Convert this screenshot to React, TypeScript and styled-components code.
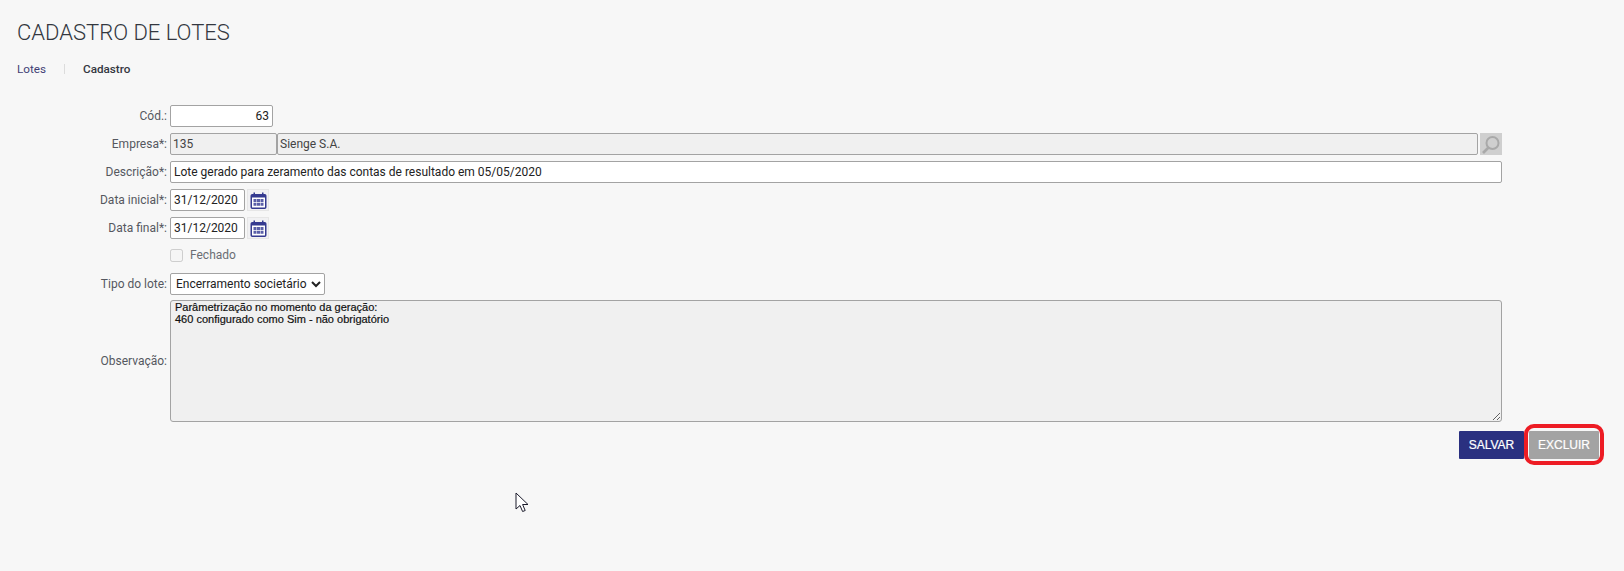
import styled, { createGlobalStyle } from 'styled-components'

const GlobalStyle = createGlobalStyle`
  html, body {
    margin: 0;
    height: 100%;
    background: #f7f7f7;
  }
  body {
    font-family: Roboto, "Liberation Sans", sans-serif;
    overflow: hidden;
  }
`

const Page = styled.div`
  position: relative;
  height: 571px;
  padding: 20px 25px 0 17px;
  box-sizing: border-box;
`

const Title = styled.h1`
  margin: 0;
  font-size: 22px;
  line-height: 26px;
  font-weight: 300;
  color: #33373f;
`

const Tabs = styled.nav`
  display: flex;
  align-items: center;
  margin-top: 15px;
  height: 16px;
  font-size: 11.7px;
`

const Tab = styled.span<{ $current?: boolean }>`
  color: ${(p) => (p.$current ? '#33363f' : '#3f3f75')};
  font-weight: ${(p) => (p.$current ? 500 : 400)};
`

const TabDivider = styled.span`
  width: 1px;
  height: 10px;
  margin: 0 18px;
  background: #dcdcdc;
`

const Form = styled.form`
  display: grid;
  grid-template-columns: 150px 1fr;
  column-gap: 3px;
  row-gap: 6px;
  margin-top: 28px;
  margin-right: 97px;
`

const Label = styled.label`
  display: flex;
  align-items: center;
  justify-content: flex-end;
  font-size: 12px;
  color: #55585f;
`

const Row = styled.div`
  display: flex;
  align-items: center;
  height: 22px;
`

const Input = styled.input<{ $width?: number; $right?: boolean; $grow?: boolean }>`
  box-sizing: border-box;
  width: ${(p) => (p.$width ? `${p.$width}px` : 'auto')};
  flex: ${(p) => (p.$grow ? '1 1 0' : '0 0 auto')};
  min-width: 0;
  height: 22px;
  padding: 0 3px;
  border: 1px solid #a3a3a3;
  border-radius: 2px;
  background: #fff;
  font-family: Roboto, sans-serif;
  font-size: 12px;
  color: #222;
  text-align: ${(p) => (p.$right ? 'right' : 'left')};
  outline: none;

  &:read-only[data-locked] {
    padding: 0 2px;
    background: #f0f0f0;
    color: #444;
  }
`

const IconButton = styled.button<{ $muted?: boolean }>`
  display: flex;
  align-items: center;
  justify-content: center;
  flex: none;
  box-sizing: border-box;
  width: 22px;
  height: 22px;
  margin-left: 2px;
  padding: 0;
  border: ${(p) => (p.$muted ? 'none' : '1px solid #e6e6e6')};
  background: ${(p) => (p.$muted ? '#cfcfcf' : '#f1f1f3')};
`

const CheckRow = styled(Row)`
  gap: 7px;
  font-size: 12px;
  color: #6b6e74;
  transform: translateY(-1px);
`

const Check = styled.input`
  width: 13px;
  height: 13px;
  margin: 0;
`

const Select = styled.select`
  box-sizing: border-box;
  width: 155px;
  height: 22px;
  padding: 0 0 0 1px;
  border: 1px solid #a3a3a3;
  border-radius: 2px;
  background: #fff;
  font-family: Roboto, sans-serif;
  font-size: 12px;
  color: #222;
`

const ObsLabel = styled(Label)`
  margin-top: -1px;
`

const Obs = styled.textarea`
  display: block;
  box-sizing: border-box;
  width: 100%;
  height: 122px;
  margin: -1px 0 0;
  padding: 0 4px;
  border: 1px solid #a3a3a3;
  border-radius: 3px;
  background: #f0f0f0;
  font-family: "Liberation Sans", Arial, sans-serif;
  font-size: 11px;
  line-height: 12px;
  color: #111;
  -webkit-text-stroke: 0.2px #111;
  outline: none;
`

const Actions = styled.div`
  display: flex;
  justify-content: flex-end;
  gap: 5px;
  margin-top: 9px;
`

const ActionButton = styled.button<{ $width: number; $variant: 'primary' | 'neutral' }>`
  position: relative;
  box-sizing: border-box;
  width: ${(p) => p.$width}px;
  height: 28px;
  padding: 0;
  border: none;
  border-radius: 1px;
  background: ${(p) => (p.$variant === 'primary' ? '#2a3080' : '#a3a3a3')};
  font-family: "Liberation Sans", Arial, sans-serif;
  font-size: 12px;
  font-weight: 400;
  color: #fff;
  -webkit-text-stroke: 0.2px #fff;
`

/* red marker somebody drew on the screenshot */
const Marker = styled.span`
  position: absolute;
  inset: -7px -5px -6px -5px;
  border: 4px solid #ed1c24;
  border-radius: 10px;
`

const Pointer = styled.svg`
  position: absolute;
  left: 515px;
  top: 492px;
`

const SearchIcon = () => (
  <svg width="20" height="20" viewBox="0 0 20 20" fill="none" stroke="#a9a9a9" strokeWidth="2">
    <circle cx="11.5" cy="9" r="6" />
    <path d="M7.5 13.5 2 19" strokeWidth="2.6" />
  </svg>
)

const CalendarIcon = () => (
  <svg width="17" height="17" viewBox="0 0 17 17">
    <rect x="1.25" y="2.75" width="14.5" height="13.5" rx="1" fill="#fff" stroke="#353a90" strokeWidth="1.5" />
    <rect x="1" y="3" width="15" height="2.5" fill="#353a90" />
    <rect x="3.5" y="0.5" width="1.5" height="4" fill="#353a90" />
    <rect x="12" y="0.5" width="1.5" height="4" fill="#353a90" />
    {[3.5, 7, 10.5].map((x) =>
      [7, 10.75].map((y) => (
        <rect key={`${x}-${y}`} x={x} y={y} width="3" height="3" fill="#5a5fa8" />
      )),
    )}
  </svg>
)

const App = () => {
  return (
    <Page>
      <GlobalStyle />
      <Title>CADASTRO DE LOTES</Title>
      <Tabs>
        <Tab>Lotes</Tab>
        <TabDivider />
        <Tab $current>Cadastro</Tab>
      </Tabs>

      <Form onSubmit={(e) => e.preventDefault()}>
        <Label>Cód.:</Label>
        <Row>
          <Input $width={103} $right defaultValue="63" />
        </Row>

        <Label>Empresa*:</Label>
        <Row>
          <Input $width={107} data-locked readOnly defaultValue="135" />
          <Input $grow data-locked readOnly defaultValue="Sienge S.A." />
          <IconButton type="button" $muted>
            <SearchIcon />
          </IconButton>
        </Row>

        <Label>Descrição*:</Label>
        <Row>
          <Input $grow defaultValue="Lote gerado para zeramento das contas de resultado em 05/05/2020" />
        </Row>

        <Label>Data inicial*:</Label>
        <Row>
          <Input $width={75} defaultValue="31/12/2020" />
          <IconButton type="button">
            <CalendarIcon />
          </IconButton>
        </Row>

        <Label>Data final*:</Label>
        <Row>
          <Input $width={75} defaultValue="31/12/2020" />
          <IconButton type="button">
            <CalendarIcon />
          </IconButton>
        </Row>

        <span />
        <CheckRow>
          <Check type="checkbox" disabled />
          Fechado
        </CheckRow>

        <Label>Tipo do lote:</Label>
        <Row>
          <Select defaultValue="enc">
            <option value="enc">Encerramento societário</option>
          </Select>
        </Row>

        <ObsLabel>Observação:</ObsLabel>
        <Obs
          readOnly
          defaultValue={'Parâmetrização no momento da geração:\n460 configurado como Sim - não obrigatório'}
        />
      </Form>

      <Actions>
        <ActionButton $width={65} $variant="primary">SALVAR</ActionButton>
        <ActionButton $width={70} $variant="neutral">
          EXCLUIR
          <Marker />
        </ActionButton>
      </Actions>

      <Pointer width="16" height="22" viewBox="0 0 16 22">
        <path
          d="M1 1v16l4-3.5 2.6 6 2.6-1-2.6-6H13z"
          fill="#fff"
          stroke="#1b1b2b"
          strokeWidth="1"
          strokeLinejoin="miter"
        />
      </Pointer>
    </Page>
  )
}

export default App
